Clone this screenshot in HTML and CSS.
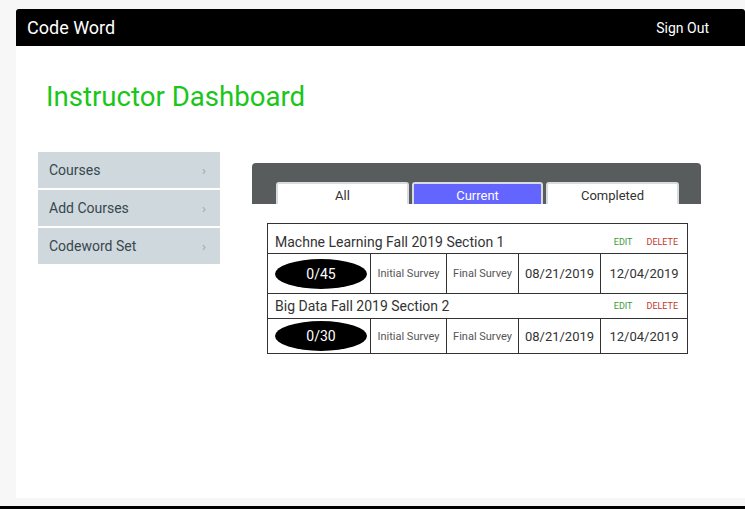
FILE: index.html
```html
<!DOCTYPE html>
<html>
<head>
<meta charset="utf-8">
<link rel="stylesheet" href="styles.css">
</head>
<body>
<div class="page">
  <header class="topbar">
    <span class="brand">Code Word</span>
    <span class="signout">Sign Out</span>
  </header>
  <h1 class="title">Instructor Dashboard</h1>
  <div class="main">
    <nav class="side">
      <div class="side-item"><span>Courses</span><span class="chev">&#8250;</span></div>
      <div class="side-item"><span>Add Courses</span><span class="chev">&#8250;</span></div>
      <div class="side-item"><span>Codeword Set</span><span class="chev">&#8250;</span></div>
    </nav>
    <section class="content">
      <div class="tabbar">
        <div class="tab">All</div>
        <div class="tab active">Current</div>
        <div class="tab">Completed</div>
      </div>
      <table class="courses">
        <colgroup>
          <col class="c1"><col class="c2"><col class="c3"><col class="c4"><col class="c5">
        </colgroup>
        <tr class="head-row r1">
          <td colspan="5"><div class="head"><span class="cname">Machne Learning Fall 2019 Section 1</span><span class="acts"><span class="edit">EDIT</span><span class="del">DELETE</span></span></div></td>
        </tr>
        <tr class="data-row r2">
          <td><div class="pill">0/45</div></td>
          <td class="small">Initial Survey</td>
          <td class="small">Final Survey</td>
          <td class="date">08/21/2019</td>
          <td class="date">12/04/2019</td>
        </tr>
        <tr class="head-row r3">
          <td colspan="5"><div class="head"><span class="cname">Big Data Fall 2019 Section 2</span><span class="acts"><span class="edit">EDIT</span><span class="del">DELETE</span></span></div></td>
        </tr>
        <tr class="data-row r4">
          <td><div class="pill">0/30</div></td>
          <td class="small">Initial Survey</td>
          <td class="small">Final Survey</td>
          <td class="date">08/21/2019</td>
          <td class="date">12/04/2019</td>
        </tr>
      </table>
    </section>
  </div>
</div>
<div class="bottom-line"></div>
</body>
</html>
```
FILE: styles.css
```css
html, body {
  margin: 0;
  padding: 0;
}
body {
  background: #f7f7f7;
  font-family: Roboto, "Noto Sans", sans-serif;
  width: 745px;
  height: 509px;
  overflow: hidden;
}
.page {
  margin: 9px 0 0 16px;
  width: 729px;
  height: 489px;
  background: #fff;
}
.topbar {
  height: 37px;
  background: #000;
  border-radius: 3px 3px 0 0;
  display: flex;
  align-items: center;
  justify-content: space-between;
  padding: 0 36px 0 11px;
  color: #fff;
}
.brand {
  font-size: 18px;
}
.signout {
  font-size: 14px;
}
.title {
  margin: 35px 0 0 30px;
  font-size: 27.6px;
  font-weight: 400;
  line-height: 32px;
  color: #19c619;
}
.main {
  display: flex;
  align-items: flex-start;
  margin: 39px 0 0 22px;
}
.side {
  width: 182px;
  display: flex;
  flex-direction: column;
  gap: 2px;
}
.side-item {
  height: 36px;
  background: #cfd8dc;
  display: flex;
  align-items: center;
  justify-content: space-between;
  padding: 0 14px 0 11px;
  font-size: 14px;
  color: #37474f;
}
.chev {
  color: #9aa4a8;
  font-size: 13px;
}
.content {
  margin: 11px 0 0 32px;
  width: 449px;
}
.tabbar {
  height: 41px;
  background: #595c5c;
  border-radius: 4px 4px 0 0;
  display: flex;
  align-items: flex-end;
  gap: 3px;
  padding-left: 24px;
  box-sizing: border-box;
}
.tab {
  width: 133px;
  height: 22px;
  box-sizing: border-box;
  background: #fff;
  border: 2px solid #d6dcdf;
  border-bottom: none;
  border-radius: 3px 3px 0 0;
  font-size: 13px;
  color: #333;
  text-align: center;
  line-height: 24px;
}
.tab.active {
  width: 131px;
  background: #6464ff;
  color: #fff;
}
.courses {
  margin: 19px 0 0 15px;
  width: 420px;
  border-collapse: collapse;
  table-layout: fixed;
}
.c1 { width: 103px; }
.c2 { width: 76px; }
.c3 { width: 72px; }
.c4 { width: 82px; }
.c5 { width: 87px; }
.courses td {
  border: 1px solid #333;
  padding: 0;
  text-align: center;
  vertical-align: middle;
}
.head-row td {
  text-align: left;
}
.r1 td { height: 29px; }
.r2 td { height: 39px; }
.r3 td { height: 24px; }
.r4 td { height: 34px; }
.head {
  display: flex;
  align-items: center;
  justify-content: space-between;
  padding: 0 8px 0 7px;
}
.r1 .head { padding-top: 6px; }
.cname {
  font-size: 14px;
  color: #333;
}
.acts {
  font-size: 9px;
  display: flex;
  gap: 14px;
  margin-right: 1px;
}
.edit { color: #3a9a3a; }
.del { color: #c0392b; }
.pill {
  width: 92px;
  height: 30px;
  margin-left: 7px;
  background: #000;
  border-radius: 50%;
  color: #fff;
  font-size: 14px;
  line-height: 30px;
  text-align: center;
}
.small {
  font-size: 11px;
  color: #555;
}
.date {
  font-size: 13px;
  color: #333;
}
.bottom-line {
  margin-top: 8px;
  height: 3px;
  background: #000;
}
```
